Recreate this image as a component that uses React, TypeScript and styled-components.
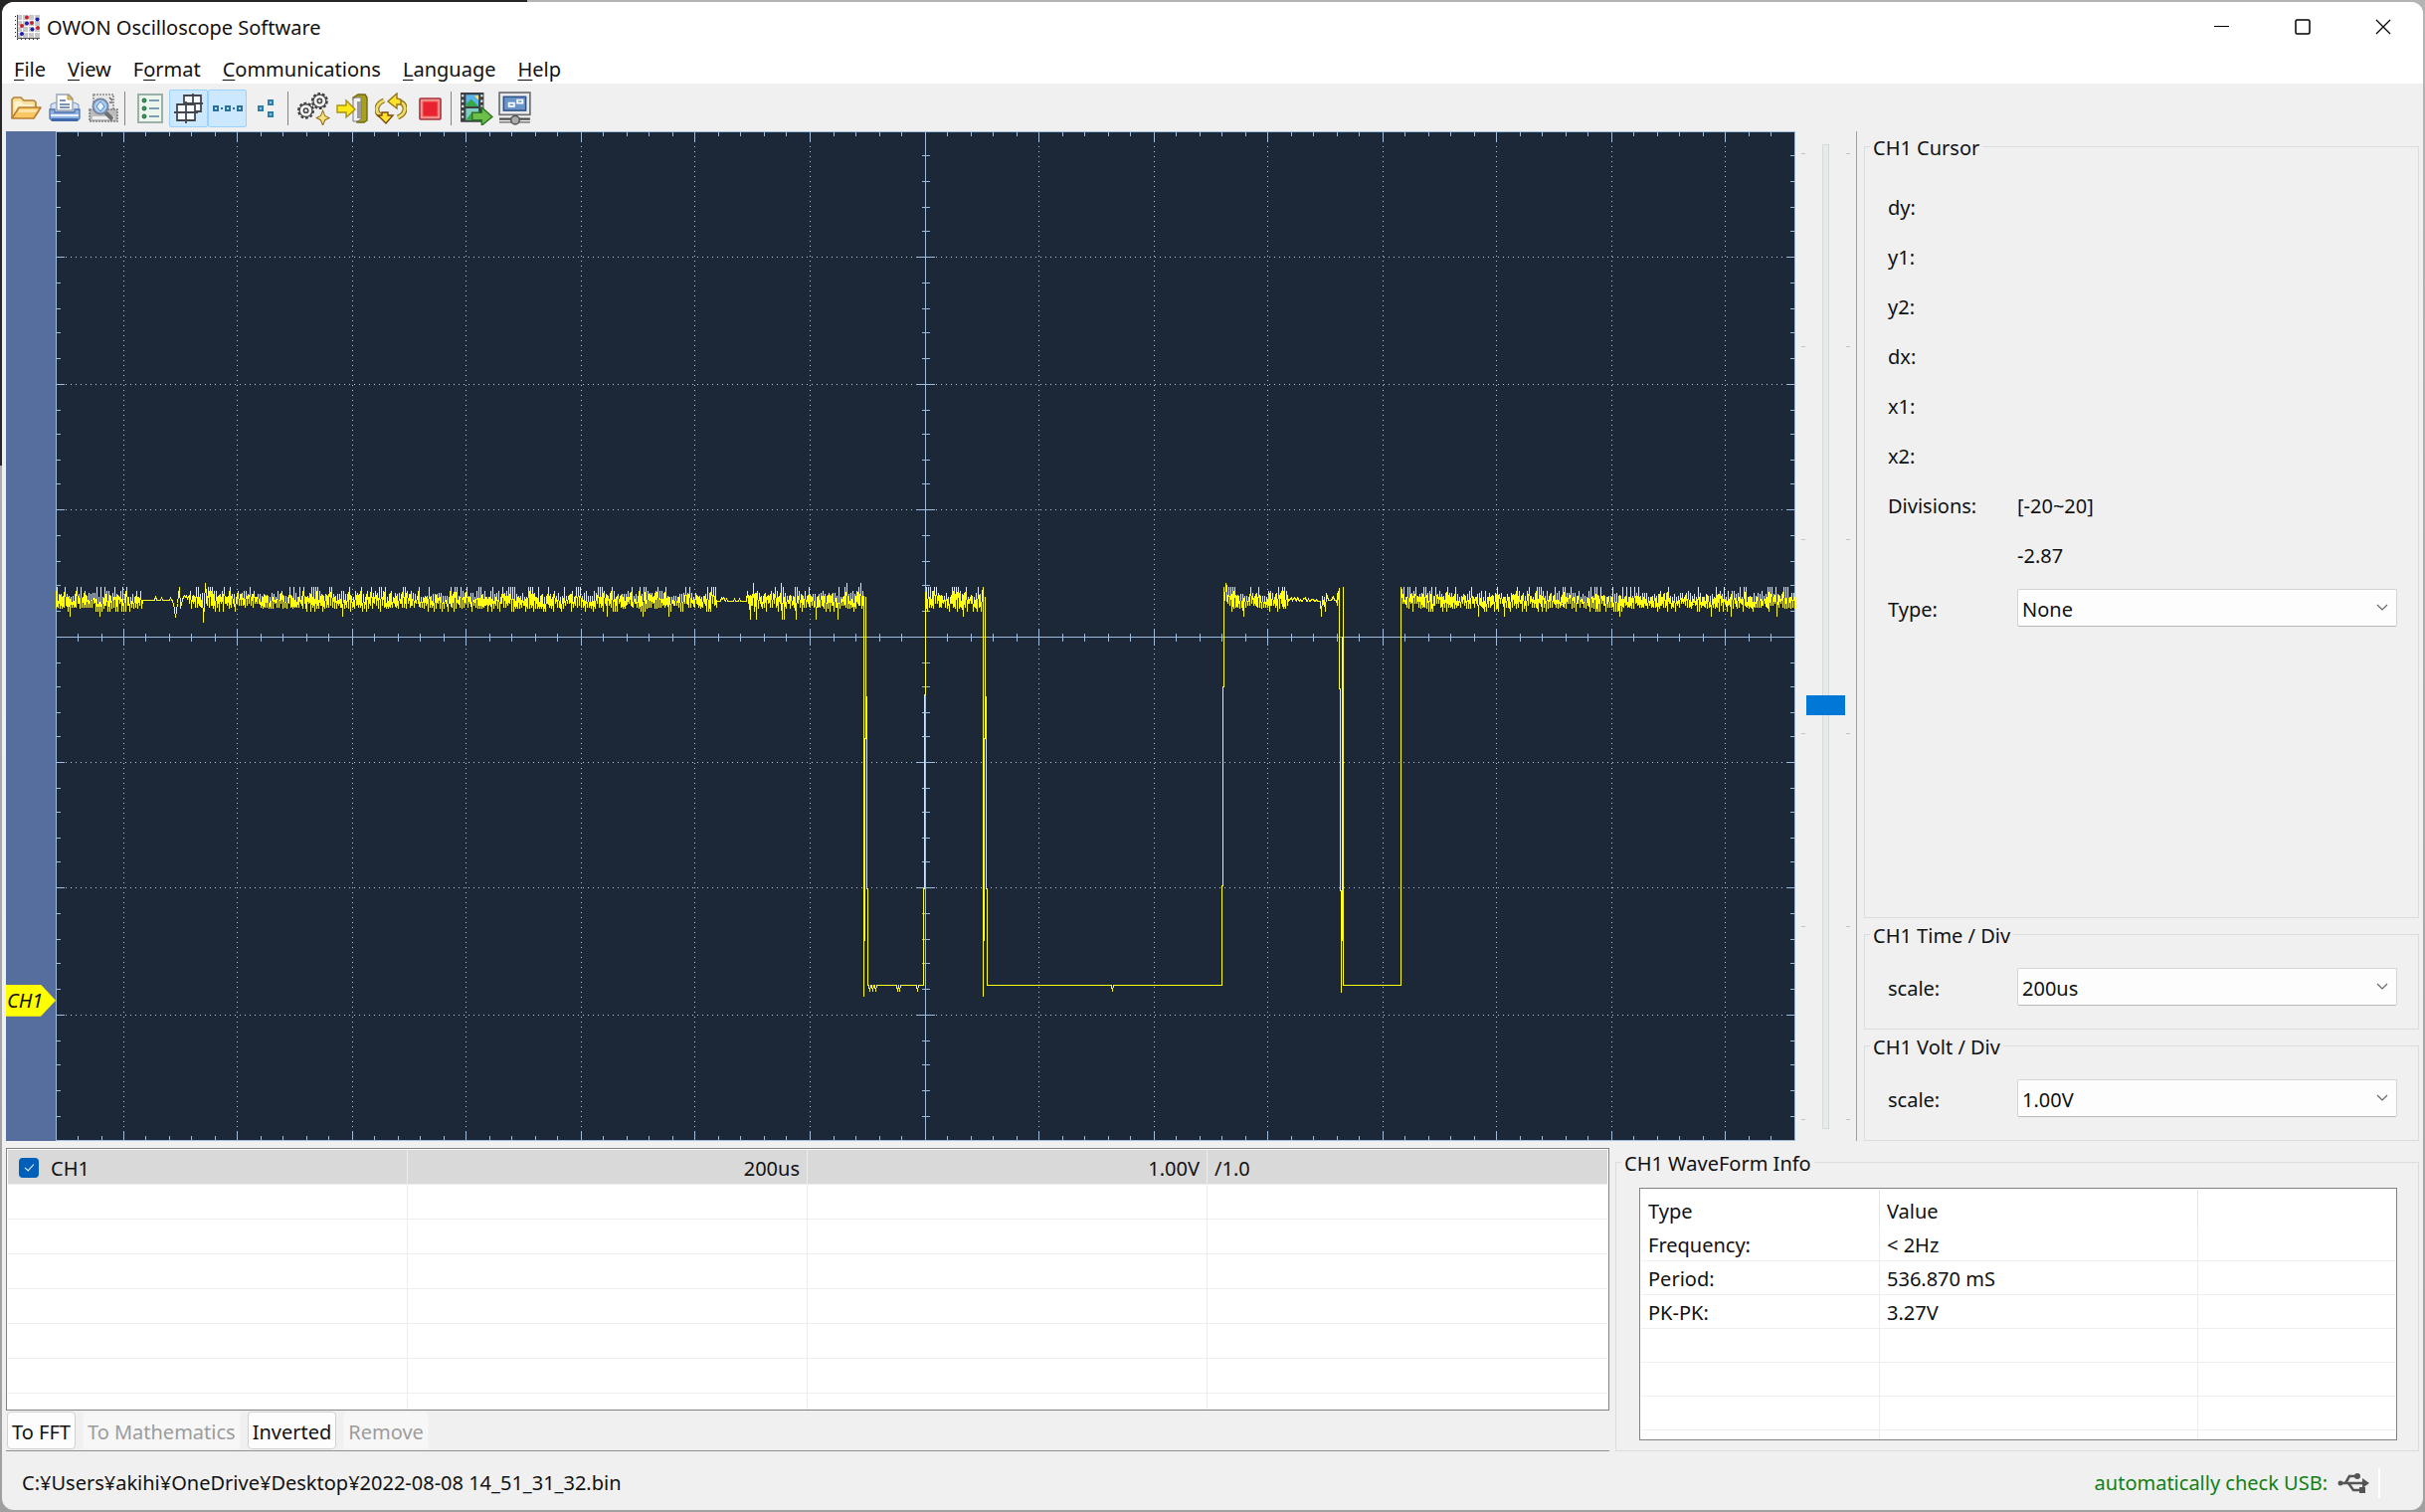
import React from "react";
import styled, { createGlobalStyle, css } from "styled-components";

const FONT = `"Noto Sans", "Open Sans", sans-serif`;

const GlobalStyle = createGlobalStyle`
  *, *::before, *::after { box-sizing: border-box; }
  html, body { margin: 0; padding: 0; }
  body, button, input, select, table {
    font-family: ${FONT};
    font-size: 20px;
    line-height: 28px;
    color: #111;
  }
`;

const Desktop = styled.div`
  height: 100vh;
  min-height: 1200px;
  display: flex;
  padding: 2px;
  background:
    linear-gradient(#262626, #262626) 0 0 / 530px 40px no-repeat,
    linear-gradient(#262626, #262626) 0 0 / 20px 468px no-repeat,
    linear-gradient(#b4b4b4, #a0a0a0);
`;

const Window = styled.main`
  flex: 1;
  min-width: 0;
  display: flex;
  flex-direction: column;
  background: #f0f0f0;
  border-radius: 12px;
  overflow: hidden;
`;

/* ---------- title bar and menu ---------- */

const TitleBar = styled.header`
  display: flex;
  align-items: center;
  height: 50px;
  padding-left: 13px;
  background: #fff;
`;

const Title = styled.h1`
  flex: 1;
  margin: 2px 0 0 7px;
  font-size: 20px;
  font-weight: 400;
`;

const CaptionButton = styled.button`
  width: 81px;
  height: 50px;
  padding: 0;
  border: 0;
  background: none;
  display: grid;
  place-items: center;
`;

const MenuBar = styled.nav`
  display: flex;
  align-items: center;
  gap: 22px;
  height: 32px;
  padding: 4px 12px 0;
  background: #fff;
`;

const MenuItem = styled.button`
  padding: 0;
  border: 0;
  background: none;
  white-space: nowrap;

  u {
    text-underline-offset: 3px;
    text-decoration-thickness: 1px;
  }
`;

/* ---------- toolbar ---------- */

const ToolBar = styled.div`
  display: flex;
  align-items: center;
  height: 48px;
  padding: 2px 4px 0;
`;

const ToolButton = styled.button<{ $on?: boolean }>`
  width: 39px;
  height: 38px;
  padding: 0;
  display: grid;
  place-items: center;
  border: 1px solid transparent;
  border-radius: 2px;
  background: none;
  ${(p) =>
    p.$on &&
    css`
      background: #cce8ff;
      border-color: #99d1ff;
    `}
`;

const ToolSeparator = styled.span`
  width: 1px;
  height: 34px;
  margin: 0 5px 0 2px;
  background: #858585;
`;

/* ---------- oscilloscope area ---------- */

const Workspace = styled.section`
  display: flex;
  flex: 1 1 0;
  min-height: 0;
  padding: 0 4px;
`;

const Gutter = styled.div`
  position: relative;
  width: 50px;
  background: #566e9d;
`;

const ChannelMarker = styled.span`
  position: absolute;
  left: 0;
  top: 84.5%;
  width: 50px;
  height: 32px;
  padding-left: 1px;
  line-height: 32px;
  font-style: italic;
  background: #ffff00;
  clip-path: polygon(0 0, 70% 0, 100% 50%, 70% 100%, 0 100%);
`;

const Plot = styled.div`
  flex: 1;
  min-width: 0;
  min-height: 0;
  background: #1c2738;

  svg {
    display: block;
    width: 100%;
    height: 100%;
  }
`;

const SliderColumn = styled.div`
  display: flex;
  width: 62px;
  padding: 13px 6px 12px 6px;
  justify-content: space-between;
  border-right: 1px solid #a0a0a0;
`;

const TickRail = styled.div`
  display: flex;
  flex-direction: column;
  justify-content: space-between;
  padding: 9px 0;

  i {
    width: 4px;
    height: 1px;
    background: #c0c4c4;
  }
`;

const OffsetSlider = styled.input`
  writing-mode: vertical-lr;
  direction: rtl;
  appearance: none;
  width: 39px;
  height: 100%;
  margin: 0;
  background: none;

  &::-webkit-slider-runnable-track {
    width: 7px;
    height: 100%;
    margin: 0 auto;
    background: #e7eaea;
    border: 1px solid #d6d9d9;
  }

  &::-webkit-slider-thumb {
    appearance: none;
    width: 39px;
    height: 20px;
    margin-left: -17px;
    background: #0078d7;
    border: 0;
  }
`;

const SidePanel = styled.aside`
  display: flex;
  flex-direction: column;
  gap: 2px;
  width: 565px;
  padding: 1px 0 0 7px;
`;

const Group = styled.fieldset<{ $grow?: boolean }>`
  min-width: 0;
  margin: 0;
  padding: ${(p) => (p.$grow ? "23px" : "12px")} 21px 15px 23px;
  border: 1px solid #dcdcdc;
  ${(p) => p.$grow && "flex: 1;"}
`;

const Legend = styled.legend`
  margin-left: -18px;
  padding: 4px 3px 0;
  line-height: 24px;
`;

const FieldName = styled.label`
  width: 130px;
`;

const FieldValue = styled.output`
  flex: 1;
`;

const Field = styled.div<{ $control?: boolean }>`
  display: flex;
  align-items: center;
  height: ${(p) => (p.$control ? "54px" : "50px")};

  ${FieldName} {
    padding-top: ${(p) => (p.$control ? "3px" : "0")};
  }
`;

const SelectFrame = styled.div`
  position: relative;
  flex: 1;

  svg {
    position: absolute;
    right: 9px;
    top: 15px;
    pointer-events: none;
  }
`;

const Select = styled.select`
  appearance: none;
  display: block;
  width: 100%;
  height: 38px;
  padding: 3px 30px 0 4px;
  border: 1px solid #d4d4d4;
  border-bottom-color: #b8b8b8;
  border-radius: 2px;
  background: #fdfdfd;
`;

/* ---------- lower area ---------- */

const LowerArea = styled.section`
  display: flex;
  gap: 6px;
  padding: 7px 4px 0;
`;

const ChannelPane = styled.div`
  flex: 1;
  min-width: 0;
  display: flex;
  flex-direction: column;
  border-bottom: 1px solid #909090;
`;

const ListBox = styled.div<{ $height: number }>`
  height: ${(p) => p.$height}px;
  padding: 1px;
  overflow: hidden;
  border: 1px solid #828282;
  background: #fff;
`;

const Grid = styled.table`
  width: 100%;
  table-layout: fixed;
  border-collapse: separate;
  border-spacing: 0;
`;

const Cell = styled.td<{ $height: number; $selected?: boolean; $right?: boolean }>`
  height: ${(p) => p.$height}px;
  padding: 3px 7px 0;
  border-right: 1px solid #eceeee;
  border-bottom: 1px solid #eeefef;
  background: ${(p) => (p.$selected ? "#d9d9d9" : "none")};
  text-align: ${(p) => (p.$right ? "right" : "left")};

  &:last-child {
    border-right: 0;
  }
`;

const HeadCell = styled.th`
  height: 38px;
  padding: 5px 7px 0;
  border-right: 1px solid #e4e6e6;
  font-weight: 400;
  text-align: left;

  &:last-child {
    border-right: 0;
  }
`;

const ChannelToggle = styled.label`
  display: flex;
  align-items: center;
  gap: 12px;
  padding-left: 4px;
`;

const CheckBox = styled.input`
  appearance: none;
  display: grid;
  place-items: center;
  width: 20px;
  height: 20px;
  margin: 0 0 2px;
  border-radius: 4px;
  background: #005fb8;

  &:checked::after {
    content: "";
    width: 5px;
    height: 9px;
    margin-bottom: 3px;
    border: solid #fff;
    border-width: 0 1px 1px 0;
    transform: rotate(42deg);
  }
`;

const ButtonRow = styled.div`
  display: flex;
  gap: 7px;
  padding: 1px 1px;
`;

const PushButton = styled.button`
  height: 38px;
  padding: 3px 4px 0;
  border: 1px solid #d2d2d2;
  border-radius: 4px;
  background: #fdfdfd;
  white-space: nowrap;

  &:disabled {
    color: #9c9c9c;
    background: #f7f7f7;
    border-color: #f4f4f4;
  }
`;

const InfoGroup = styled.fieldset`
  min-width: 0;
  width: 808px;
  margin: 0;
  padding: 12px 21px 9px 23px;
  border: 1px solid #dcdcdc;
`;

const StatusBar = styled.footer`
  display: flex;
  align-items: center;
  justify-content: space-between;
  height: 59px;
  padding: 4px 43px 0 20px;
`;

const UsbStatus = styled.span`
  display: flex;
  align-items: center;
  gap: 10px;
  height: 30px;
  padding-right: 9px;
  border-right: 2px solid #fff;
  color: #0f8015;
`;

/* ---------- waveform ---------- */

const PLOT_LEFT = 56;
const PLOT_TOP = 132;
const PLOT_W = 1749;
const PLOT_H = 1015;

const COLUMNS = [124, 238, 354, 468, 584, 698, 814, 930, 1044, 1160, 1274, 1390, 1504, 1620, 1734];
const ROWS = [258, 386, 512, 640, 766, 892, 1020];
const CENTRE_X = 930;
const CENTRE_Y = 640;

function subdivide(major: number[], pitch: number, from: number, to: number) {
  const stops = [major[0] - pitch, ...major, major[major.length - 1] + pitch];
  const out: number[] = [];
  for (let i = 0; i < stops.length - 1; i++) {
    for (let k = 1; k < 5; k++) {
      const v = 2 * Math.round((stops[i] + ((stops[i + 1] - stops[i]) * k) / 5) / 2);
      if (v > from && v < to) out.push(v);
    }
  }
  return out;
}

function ticksPath() {
  const L = PLOT_LEFT;
  const R = PLOT_LEFT + PLOT_W;
  const T = PLOT_TOP;
  const B = PLOT_TOP + PLOT_H;
  const parts: string[] = [];
  const vertical = (x: number, edge: number, mid: number) => {
    parts.push(`M${x + 0.5} ${T}v${edge}M${x + 0.5} ${B}v${-edge}M${x + 0.5} ${CENTRE_Y + 0.5 - mid}v${mid * 2}`);
  };
  const horizontal = (y: number, edge: number, mid: number) => {
    parts.push(`M${L} ${y + 0.5}h${edge}M${R} ${y + 0.5}h${-edge}M${CENTRE_X + 0.5 - mid} ${y + 0.5}h${mid * 2}`);
  };
  COLUMNS.forEach((x) => vertical(x, 10, 8));
  ROWS.forEach((y) => horizontal(y, 9, 9));
  subdivide(COLUMNS, 115, L + 4, R - 4).forEach((x) => vertical(x, 5, 4));
  subdivide(ROWS, 127, T + 4, B - 4).forEach((y) => horizontal(y, 5, 4));
  return parts.join("");
}

function tracePath() {
  let seed = 20220808;
  const rnd = () => {
    seed = (seed * 1103515245 + 12345) % 2147483648;
    return seed / 2147483648;
  };
  const pick = (list: number[]) => list[Math.floor(rnd() * list.length)];
  const pts: [number, number][] = [];
  const to = (x: number, y: number) => pts.push([x + 0.5, y + 0.5]);

  const noise = (from: number, until: number, wild = 0) => {
    for (let x = from; x <= until; x++) {
      const r = rnd();
      const doubled = rnd() < 0.45;
      if (x % 2) {
        to(x, r < wild ? 586 : r < 0.28 ? 590 : pick([594, 596, 597, 599, 600]));
        if (doubled) to(x, pick([602, 605, 608]));
      } else {
        to(x, r < wild ? 622 : r < 0.02 ? 619 : r < 0.2 ? 614 : pick([606, 608, 610, 610, 611]));
        if (doubled) to(x, pick([598, 600, 603]));
      }
    }
  };
  const ripple = (from: number, until: number, level: number, chance: number) => {
    for (let x = from; x <= until; x++) to(x, rnd() < chance ? level - pick([2, 3, 4]) : level);
  };
  const low = (from: number, until: number, blips: number[]) => {
    to(from, 990);
    blips.forEach((x) => {
      to(x - 1, 990);
      to(x, 996);
      to(x + 1, 990);
    });
    to(until, 990);
  };

  noise(56, 142);
  ripple(143, 173, 603, 0.14);
  to(175, 612);
  to(176, 620);
  to(178, 606);
  to(180, 590);
  to(181, 611);
  ripple(183, 190, 602, 0.4);
  noise(190, 203);
  to(204, 625);
  to(206, 586);
  noise(207, 720);
  ripple(721, 750, 604, 0.1);
  noise(751, 868, 0.08);

  to(868, 1001);
  to(869, 892);
  to(870, 600);
  to(870, 700);
  to(871, 700);
  to(871, 893);
  to(872, 893);
  low(872, 928, [874, 877, 880, 902, 904, 922]);
  to(928, 893);
  to(929, 893);
  to(929, 698);
  to(930, 698);
  to(930, 600);
  noise(931, 987);

  to(988, 590);
  to(988, 1001);
  to(989, 892);
  to(990, 600);
  to(990, 700);
  to(991, 700);
  to(991, 893);
  to(992, 893);
  low(992, 1228, [1118]);
  to(1228, 890);
  to(1229, 890);
  to(1229, 690);
  to(1230, 690);
  to(1230, 590);
  to(1231, 603);
  to(1232, 586);
  noise(1233, 1294);
  ripple(1295, 1327, 604, 0.45);
  noise(1328, 1333);
  ripple(1334, 1343, 603, 0.5);
  noise(1344, 1346);

  to(1346, 590);
  to(1346, 692);
  to(1347, 692);
  to(1347, 895);
  to(1348, 895);
  to(1348, 997);
  to(1349, 895);
  to(1349, 692);
  to(1350, 590);
  low(1350, 1408, []);
  to(1408, 590);
  noise(1409, 1805);

  return "M" + pts.map(([x, y]) => `${x} ${y}`).join("L");
}

const TICKS = ticksPath();
const TRACE = tracePath();

function Scope() {
  const right = PLOT_LEFT + PLOT_W;
  const bottom = PLOT_TOP + PLOT_H;
  return (
    <svg
      viewBox={`${PLOT_LEFT} ${PLOT_TOP} ${PLOT_W} ${PLOT_H}`}
      preserveAspectRatio="none"
      shapeRendering="crispEdges"
      role="img"
      aria-label="CH1"
    >
      <g fill="none" stroke="#b4c6d6" strokeDasharray="1 4">
        {COLUMNS.map((x) => (
          <path key={x} d={`M${x + 0.5} ${PLOT_TOP}V${bottom}`} />
        ))}
        {ROWS.map((y) => (
          <path key={y} d={`M${PLOT_LEFT} ${y + 0.5}H${right}`} />
        ))}
      </g>
      <g fill="none" stroke="#9fbbdb">
        <path
          d={`M${PLOT_LEFT + 0.5} ${PLOT_TOP + 0.5}H${right - 0.5}V${bottom - 0.5}H${PLOT_LEFT + 0.5}Z`}
        />
        <path d={`M${PLOT_LEFT} ${CENTRE_Y + 0.5}H${right}M${CENTRE_X + 0.5} ${PLOT_TOP}V${bottom}`} />
        <path d={TICKS} />
      </g>
      <path d={TRACE} fill="none" stroke="#ffff14" strokeLinejoin="bevel" />
    </svg>
  );
}

/* ---------- icons ---------- */

const Icon = ({ children, size = 32 }: { children: React.ReactNode; size?: number }) => (
  <svg width={size} height={size} viewBox="0 0 32 32" fill="none" aria-hidden="true">
    {children}
  </svg>
);

const AppIcon = () => (
  <svg width="25" height="25" viewBox="0 0 25 25" aria-hidden="true">
    <path fill="#c9c9cc" d="M3 0h4v5H3zM8 0h5v5H8zM14 0h5v5h-5zM20 0h5v5h-5zM3 6h4v5H3zM8 6h5v5H8zM14 6h5v5h-5zM20 6h5v5h-5zM3 12h4v5H3zM8 12h5v5H8zM14 12h5v5h-5zM20 12h5v5h-5zM3 18h4v5H3zM8 18h5v5H8zM14 18h5v5h-5zM20 18h5v5h-5z" />
    <path stroke="#222" strokeDasharray="1 3" d="M.5 1v23M2 24.500h23" />
    <path stroke="#555" d="M2.500 0v23.500H25" fill="none" />
    <g fill="#c8202c">
      <circle cx="12" cy="2.500" r="2" />
      <circle cx="7" cy="11" r="2" />
      <circle cx="17" cy="8" r="2" />
      <circle cx="23" cy="13" r="2" />
    </g>
    <g fill="#1a1fb4">
      <circle cx="22.500" cy="4.500" r="2" />
      <circle cx="12" cy="8.500" r="2" />
      <circle cx="17.500" cy="14.500" r="2" />
      <circle cx="7" cy="19" r="2" />
    </g>
  </svg>
);

const FolderIcon = () => (
  <Icon>
    <path d="M2 26V7l2-2h7l3 3h10l2 2v5" fill="#f8dfa0" stroke="#b67f2d" strokeWidth="1.600" />
    <path d="M4 9h7l3 3h9v3H11L5 22z" fill="#fff3cd" />
    <path d="M2 26l7-11h22l-7 11z" fill="#fbc765" stroke="#b67f2d" strokeWidth="1.600" strokeLinejoin="round" />
    <path d="M10 17h18l-2 3H8z" fill="#fee3a5" />
  </Icon>
);

const PrinterIcon = () => (
  <Icon>
    <path d="M2 12l5-2h18l5 2v8H2z" fill="#d4e2f5" stroke="#7d93b8" />
    <path d="M8 2h12l4 4v12H8z" fill="#fff" stroke="#9aa4b5" strokeWidth="1.400" />
    <path d="M19 2l5 5h-5z" fill="#e7c46c" stroke="#b99645" />
    <path d="M11 8h6M11 12h10M11 15h10" stroke="#4d6f9d" strokeWidth="1.600" />
    <path d="M1 17h5v3h20v-3h5v9l-2 2H3l-2-2z" fill="#8fb2e2" stroke="#5274ac" strokeWidth="1.300" />
    <path d="M2 22h28v2H2z" fill="#e9f1fc" />
    <path d="M3 26h26v3H3z" fill="#3f67ae" />
  </Icon>
);

const PreviewIcon = () => (
  <Icon>
    <path d="M6 2h20v17H6z" fill="#e7e7e7" stroke="#8c8c8c" strokeWidth="1.600" strokeDasharray="2 1" />
    <path d="M2 17h28v12H2z" fill="#bcbcbc" stroke="#7e7e7e" strokeWidth="1.600" strokeDasharray="2 1" />
    <path d="M5 24h22v3H5z" fill="#efefef" />
    <path d="M18 20l7 7" stroke="#6f6f6f" strokeWidth="4" />
    <circle cx="13" cy="14" r="7.500" fill="#a8cdf0" stroke="#7888a0" strokeWidth="2" />
    <path d="M9 14l4-5 4 5-4 5z" fill="#e6f3ff" stroke="#4e86c4" />
    <path d="M22 5l3 3M22 10h3" stroke="#6b6b6b" strokeWidth="1.500" />
  </Icon>
);

const ListIcon = () => (
  <Icon>
    <rect x="4" y="2" width="24" height="28" fill="#edf5ef" stroke="#9ab0a8" strokeWidth="2" />
    <g fill="#3b9a5b" stroke="#1d6b3b">
      <circle cx="10" cy="8" r="2" />
      <circle cx="10" cy="16" r="2" />
      <circle cx="10" cy="24" r="2" />
    </g>
    <path d="M15 8h10M15 16h10M15 24h10" stroke="#5f7f9a" strokeWidth="1.600" />
  </Icon>
);

const GridIcon = () => (
  <Icon>
    <path d="M11 3h17v16h-6v9H4V12h7z" fill="#f6fbff" />
    <path
      d="M11 12V3h17v16h-6M20 1v11M11 11h19M4 12h18v16H4zM13 9v22M1 20h24"
      stroke="#45454d"
      strokeWidth="1.800"
    />
  </Icon>
);

const LinkedDotsIcon = () => (
  <Icon>
    <g fill="#bfe2f7" stroke="#2a7099" strokeWidth="2">
      <rect x="2" y="14" width="4" height="4" />
      <rect x="14" y="14" width="4" height="4" />
      <rect x="26" y="14" width="4" height="4" />
    </g>
    <path d="M9 16h2M21 16h2" stroke="#2a6a94" strokeWidth="2" />
  </Icon>
);

const DotsIcon = () => (
  <Icon>
    <g fill="#8fcbe8" stroke="#2f7da8" strokeWidth="2">
      <rect x="8" y="14" width="4" height="4" />
      <rect x="18" y="8" width="4" height="4" />
      <rect x="18" y="20" width="4" height="4" />
    </g>
  </Icon>
);

const GearsIcon = () => (
  <Icon size={34}>
    <circle cx="9" cy="18" r="7" stroke="#3c3c3c" strokeWidth="2" strokeDasharray="2.600 1.800" />
    <circle cx="9" cy="18" r="6" fill="#f4f4f4" stroke="#4a4a4a" strokeWidth="1.200" />
    <circle cx="9" cy="18" r="2" fill="#fff" stroke="#4a4a4a" strokeWidth="1.600" />
    <circle cx="22" cy="9" r="7" stroke="#3c3c3c" strokeWidth="2" strokeDasharray="2.600 1.800" />
    <circle cx="22" cy="9" r="6" fill="#f4f4f4" stroke="#4a4a4a" strokeWidth="1.200" />
    <circle cx="22" cy="9" r="2" fill="#fff" stroke="#4a4a4a" strokeWidth="1.600" />
    <path d="M25 18l2 5 4 2-4 2-2 5-2-5-4-2 4-2z" fill="#f9e27c" stroke="#93721c" />
  </Icon>
);

const ImportIcon = () => (
  <Icon>
    <path d="M17 5l5-3h7l2 3v23l-3 2h-7z" fill="#a8a01c" stroke="#6f6a12" strokeWidth="1.400" />
    <path d="M17 6l3-1h5v22l-4 2h-4z" fill="#f1f1f1" stroke="#777" />
    <path d="M21 9h4v17h-4z" fill="#9a9a9a" />
    <path d="M1 13h9V8l9 9-9 8v-5H1z" fill="#ffe81a" stroke="#a8901a" strokeWidth="1.400" />
  </Icon>
);

const SyncIcon = () => (
  <Icon>
    <path d="M9 24C-1 22 0 12 9 8M23 9c10 2 9 12 0 16" stroke="#8c7317" strokeWidth="5" />
    <path d="M9 24C-1 22 0 12 9 8M23 9c10 2 9 12 0 16" stroke="#efdc6a" strokeWidth="2.800" />
    <path d="M22 1v5l4 1v5h-4v4l-9-7z" fill="#ffe32b" stroke="#94761b" strokeWidth="1.400" />
    <path d="M3 23h4v-3h6v3h5l-7 8z" fill="#ffe32b" stroke="#7a4a12" strokeWidth="1.400" />
  </Icon>
);

const StopIcon = () => (
  <Icon>
    <rect x="6" y="6" width="21" height="21" rx="1" fill="#ee9a98" stroke="#a83238" strokeWidth="1.600" />
    <rect x="9" y="9" width="15" height="15" fill="#e8222e" stroke="#f5605f" />
  </Icon>
);

const ExportIcon = () => (
  <Icon size={34}>
    <path d="M1 1h22v28H1z" fill="#3d3f42" />
    <path d="M2 3h2v2H2zM2 8h2v2H2zM2 13h2v2H2zM2 18h2v2H2zM2 23h2v2H2zM20 3h2v2h-2zM20 8h2v2h-2zM20 13h2v2h-2z" fill="#f2f2f2" />
    <path d="M6 3h12v11H6z" fill="#5bb5e8" />
    <path d="M6 12l5-5 7 7H6z" fill="#3aa64a" />
    <path d="M14 4h4v4z" fill="#ffe27a" />
    <path d="M6 16h12v11H6z" fill="#7fd0c3" />
    <path d="M6 27l6-8 6 8z" fill="#3aa64a" />
    <path d="M12 20h9v-5l10 9-10 8v-5h-9z" fill="#6cc04a" stroke="#2c7524" strokeWidth="1.400" />
  </Icon>
);

const MonitorIcon = () => (
  <Icon size={34}>
    <rect x="1" y="1" width="29" height="21" fill="#e8eaed" stroke="#6e7074" strokeWidth="1.600" />
    <rect x="5" y="5" width="21" height="13" fill="#6a93c8" stroke="#2e5283" strokeWidth="1.400" />
    <path d="M10 11h5v3h-5zM18 8h5v3h-5z" stroke="#fff" strokeWidth="1.600" />
    <path d="M16 22v4" stroke="#666" strokeWidth="4" />
    <path d="M1 26h29" stroke="#4d4d4d" strokeWidth="2" />
    <path d="M1 29h29" stroke="#8b8b8b" strokeWidth="1.600" />
    <circle cx="16" cy="27" r="4" fill="#ababab" stroke="#555" strokeWidth="1.400" />
  </Icon>
);

const UsbIcon = () => (
  <svg width="32" height="22" viewBox="0 0 32 22" fill="none" aria-hidden="true">
    <path d="M1 11h27M8 11l4-7h7M11 11l5 7h8" stroke="#555" strokeWidth="2.600" />
    <path d="M25 6l7 5-7 5z" fill="#555" />
    <circle cx="3" cy="11" r="2.500" fill="#555" />
    <circle cx="20" cy="4" r="3" fill="#555" />
    <rect x="22" y="15" width="6" height="6" fill="#555" />
  </svg>
);

const Chevron = () => (
  <svg width="12" height="8" viewBox="0 0 12 8" fill="none" aria-hidden="true">
    <path d="M1 1l5 5 5-5" stroke="#666" strokeWidth="1.200" />
  </svg>
);

/* ---------- data ---------- */

const MENU: [string, string, string][] = [
  ["", "F", "ile"],
  ["", "V", "iew"],
  ["F", "o", "rmat"],
  ["", "C", "ommunications"],
  ["", "L", "anguage"],
  ["", "H", "elp"],
];

const TOOLS = [
  [
    { name: "Open", icon: <FolderIcon /> },
    { name: "Print", icon: <PrinterIcon /> },
    { name: "Print preview", icon: <PreviewIcon /> },
  ],
  [
    { name: "Channel list", icon: <ListIcon /> },
    { name: "Grid", icon: <GridIcon />, on: true },
    { name: "Line mode", icon: <LinkedDotsIcon />, on: true },
    { name: "Dot mode", icon: <DotsIcon /> },
  ],
  [
    { name: "Settings", icon: <GearsIcon /> },
    { name: "Get data", icon: <ImportIcon /> },
    { name: "Auto refresh", icon: <SyncIcon /> },
    { name: "Stop", icon: <StopIcon /> },
  ],
  [
    { name: "Playback", icon: <ExportIcon /> },
    { name: "Network", icon: <MonitorIcon /> },
  ],
] as { name: string; icon: React.ReactNode; on?: boolean }[][];

const READOUTS = [
  ["dy:", ""],
  ["y1:", ""],
  ["y2:", ""],
  ["dx:", ""],
  ["x1:", ""],
  ["x2:", ""],
  ["Divisions:", "[-20~20]"],
  ["", "-2.87"],
];

const MEASURES = [
  ["Frequency:", "< 2Hz"],
  ["Period:", "536.870 mS"],
  ["PK-PK:", "3.27V"],
  ["", ""],
  ["", ""],
  ["", ""],
  ["", ""],
];

function Choice({ id, label, value }: { id: string; label: string; value: string }) {
  return (
    <Field $control>
      <FieldName htmlFor={id}>{label}</FieldName>
      <SelectFrame>
        <Select id={id} defaultValue={value}>
          <option>{value}</option>
        </Select>
        <Chevron />
      </SelectFrame>
    </Field>
  );
}

export default function App() {
  return (
    <Desktop>
      <GlobalStyle />
      <Window>
        <TitleBar>
          <AppIcon />
          <Title>OWON Oscilloscope Software</Title>
          <CaptionButton aria-label="Minimize">
            <svg width="16" height="16" viewBox="0 0 16 16" aria-hidden="true">
              <path d="M0 7.500h15" stroke="#000" />
            </svg>
          </CaptionButton>
          <CaptionButton aria-label="Maximize">
            <svg width="16" height="16" viewBox="0 0 16 16" aria-hidden="true">
              <rect x="1" y="1" width="14" height="14" rx="1.500" fill="none" stroke="#000" strokeWidth="1.500" />
            </svg>
          </CaptionButton>
          <CaptionButton aria-label="Close">
            <svg width="16" height="16" viewBox="0 0 16 16" aria-hidden="true">
              <path d="M1 1l14 14M15 1L1 15" stroke="#000" strokeWidth="1.300" />
            </svg>
          </CaptionButton>
        </TitleBar>
        <MenuBar>
          {MENU.map(([before, key, after]) => (
            <MenuItem key={before + key + after}>
              {before}
              <u>{key}</u>
              {after}
            </MenuItem>
          ))}
        </MenuBar>
        <ToolBar role="toolbar">
          {TOOLS.map((group, i) => (
            <React.Fragment key={i}>
              {i > 0 && <ToolSeparator />}
              {group.map((t) => (
                <ToolButton key={t.name} aria-label={t.name} $on={t.on}>
                  {t.icon}
                </ToolButton>
              ))}
            </React.Fragment>
          ))}
        </ToolBar>

        <Workspace>
          <Gutter>
            <ChannelMarker>CH1</ChannelMarker>
          </Gutter>
          <Plot>
            <Scope />
          </Plot>
          <SliderColumn>
            <TickRail>
              {[0, 1, 2, 3, 4, 5].map((n) => (
                <i key={n} />
              ))}
            </TickRail>
            <OffsetSlider
              type="range"
              min={-20}
              max={20}
              step={0.01}
              defaultValue={-2.87}
              aria-label="CH1 divisions"
            />
            <TickRail>
              {[0, 1, 2, 3, 4, 5].map((n) => (
                <i key={n} />
              ))}
            </TickRail>
          </SliderColumn>
          <SidePanel>
            <Group $grow>
              <Legend>CH1 Cursor</Legend>
              {READOUTS.map(([name, value], i) => (
                <Field key={i}>
                  <FieldName as="span">{name}</FieldName>
                  <FieldValue>{value}</FieldValue>
                </Field>
              ))}
              <Choice id="cursor-type" label="Type:" value="None" />
            </Group>
            <Group>
              <Legend>CH1 Time / Div</Legend>
              <Choice id="time-scale" label="scale:" value="200us" />
            </Group>
            <Group>
              <Legend>CH1 Volt / Div</Legend>
              <Choice id="volt-scale" label="scale:" value="1.00V" />
            </Group>
          </SidePanel>
        </Workspace>

        <LowerArea>
          <ChannelPane>
            <ListBox $height={264}>
              <Grid>
                <tbody>
                  <tr>
                    <Cell $height={35} $selected>
                      <ChannelToggle>
                        <CheckBox type="checkbox" defaultChecked />
                        CH1
                      </ChannelToggle>
                    </Cell>
                    <Cell $height={35} $selected $right>
                      200us
                    </Cell>
                    <Cell $height={35} $selected $right>
                      1.00V
                    </Cell>
                    <Cell $height={35} $selected>
                      /1.0
                    </Cell>
                  </tr>
                  {[1, 2, 3, 4, 5, 6, 7].map((n) => (
                    <tr key={n}>
                      <Cell $height={35} />
                      <Cell $height={35} />
                      <Cell $height={35} />
                      <Cell $height={35} />
                    </tr>
                  ))}
                </tbody>
              </Grid>
            </ListBox>
            <ButtonRow>
              <PushButton>To FFT</PushButton>
              <PushButton disabled>To Mathematics</PushButton>
              <PushButton>Inverted</PushButton>
              <PushButton disabled>Remove</PushButton>
            </ButtonRow>
          </ChannelPane>
          <InfoGroup>
            <Legend>CH1 WaveForm Info</Legend>
            <ListBox $height={254}>
              <Grid>
                <colgroup>
                  <col width="240" />
                  <col width="320" />
                  <col />
                </colgroup>
                <thead>
                  <tr>
                    <HeadCell>Type</HeadCell>
                    <HeadCell>Value</HeadCell>
                    <HeadCell />
                  </tr>
                </thead>
                <tbody>
                  {MEASURES.map(([type, value], i) => (
                    <tr key={i}>
                      <Cell $height={34}>{type}</Cell>
                      <Cell $height={34}>{value}</Cell>
                      <Cell $height={34} />
                    </tr>
                  ))}
                </tbody>
              </Grid>
            </ListBox>
          </InfoGroup>
        </LowerArea>

        <StatusBar>
          <span>C:¥Users¥akihi¥OneDrive¥Desktop¥2022-08-08 14_51_31_32.bin</span>
          <UsbStatus>
            automatically check USB:
            <UsbIcon />
          </UsbStatus>
        </StatusBar>
      </Window>
    </Desktop>
  );
}
